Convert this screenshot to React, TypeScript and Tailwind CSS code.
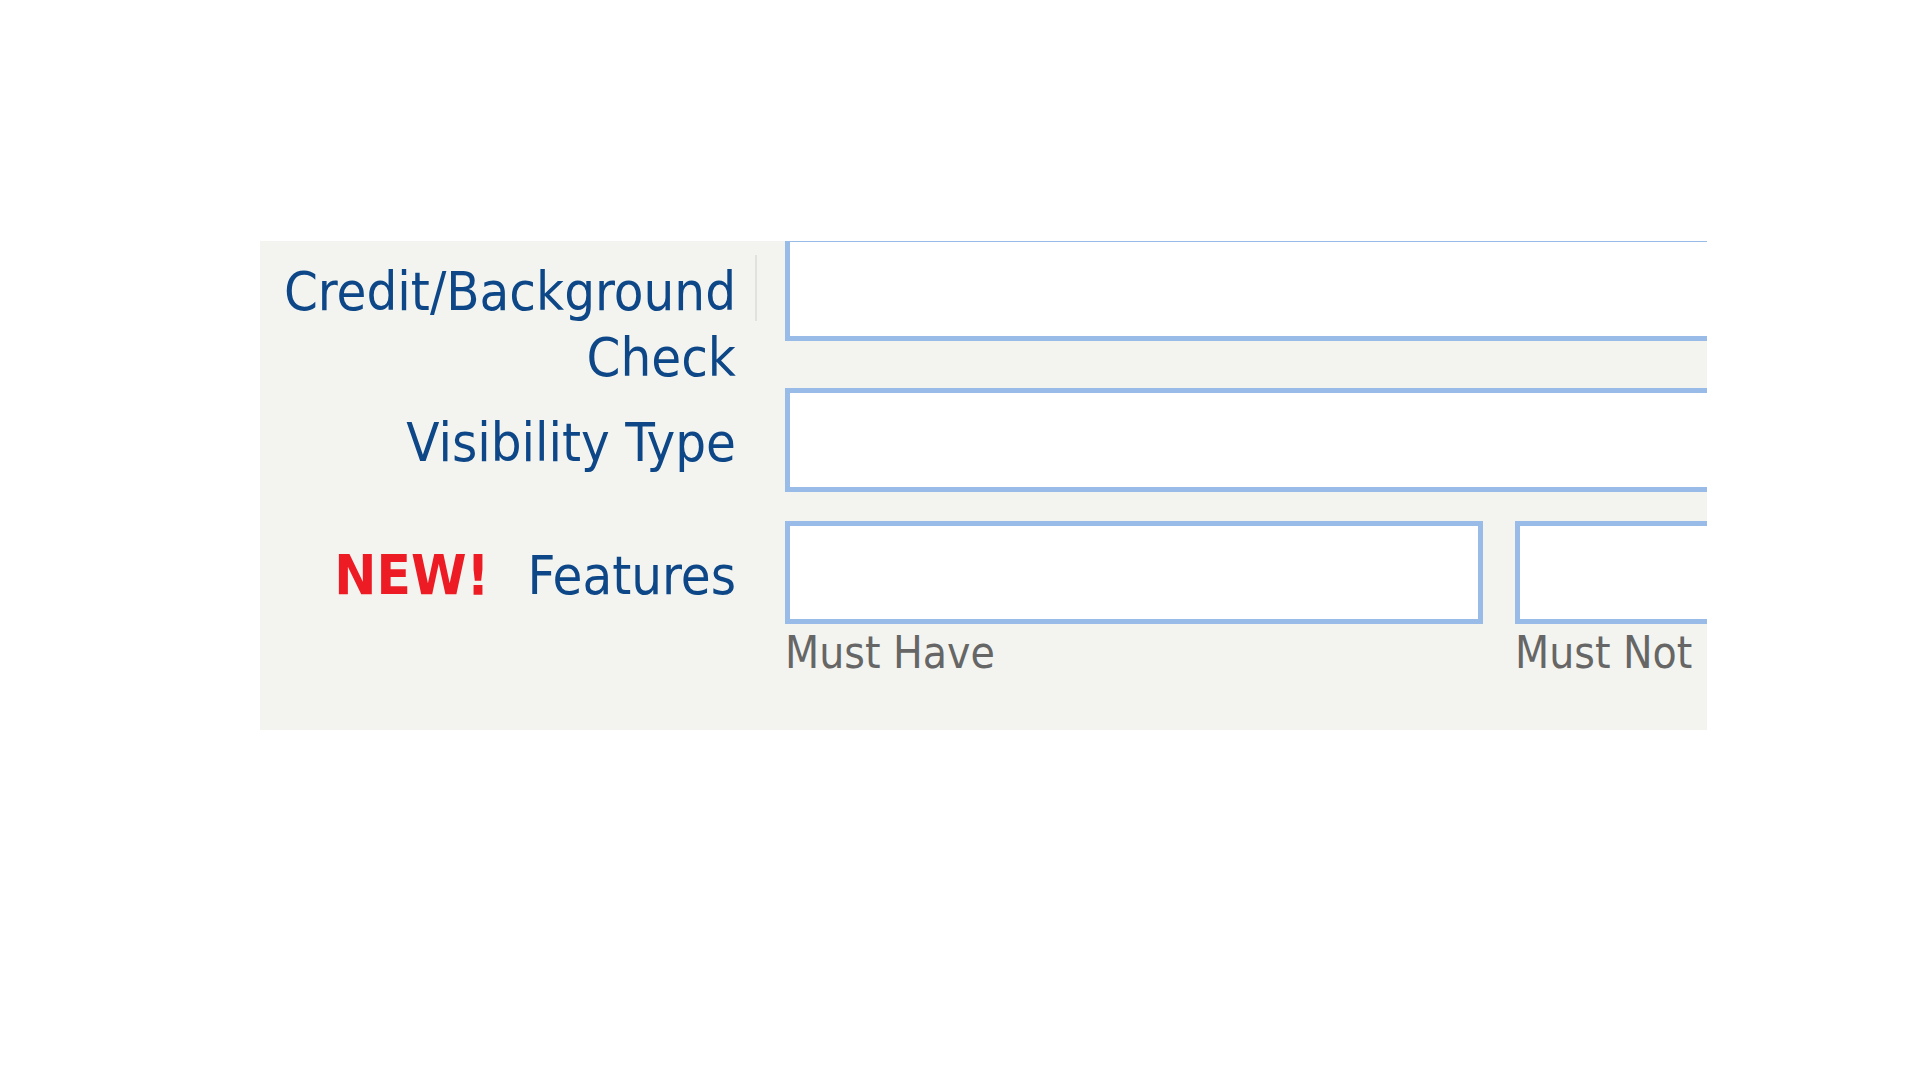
import React from "react";

const font = "[font-family:'DejaVu_Sans_Condensed','DejaVu_Sans',sans-serif]";

export default function App() {
  return (
    <div className={`min-h-screen w-full bg-white pt-[241px] pl-[260px] ${font}`}>
      <div className="h-[489px] w-[1447px] overflow-hidden bg-[#f3f4ef]">
        {/* Row 1 */}
        <div className="-mt-[4px] flex h-[151px] items-start">
          <div className="w-[476px] shrink-0 pt-[22px] text-right text-[54px] leading-[66px] text-[#0d4787]">
            Credit/Background
            <br />
            Check
          </div>
          <div className="ml-[19px] mt-[18px] h-[66px] w-[2px] shrink-0 bg-[#e2e2dc]" />
          <div className="ml-[28px] h-[104px] w-[1000px] shrink-0 border-[5px] border-[#99bbe8] bg-white" />
        </div>
        {/* Row 2 */}
        <div className="flex h-[133px] items-start">
          <div className="w-[476px] shrink-0 pt-[22px] text-right text-[54px] leading-[66px] text-[#0d4787]">
            Visibility Type
          </div>
          <div className="ml-[49px] h-[104px] w-[1000px] shrink-0 border-[5px] border-[#99bbe8] bg-white" />
        </div>
        {/* Row 3 */}
        <div className="flex items-start">
          <div className="w-[476px] shrink-0 pt-[21px] text-right text-[54px] leading-[66px]">
            <span className="text-[56px] font-bold text-[#ed1c24]">NEW!</span>
            <span className="ml-[38px] text-[#0d4787]">Features</span>
          </div>
          <div className="ml-[49px] flex shrink-0 gap-[32px]">
            <div className="flex w-[698px] shrink-0 flex-col">
              <div className="h-[103px] border-[5px] border-[#99bbe8] bg-white" />
              <div className="mt-[3px] text-[44px] leading-[52px] text-[#666666]">Must Have</div>
            </div>
            <div className="flex w-[698px] shrink-0 flex-col">
              <div className="h-[103px] border-[5px] border-[#99bbe8] bg-white" />
              <div className="mt-[3px] text-[44px] leading-[52px] text-[#666666]">Must Not</div>
            </div>
          </div>
        </div>
      </div>
    </div>
  );
}
